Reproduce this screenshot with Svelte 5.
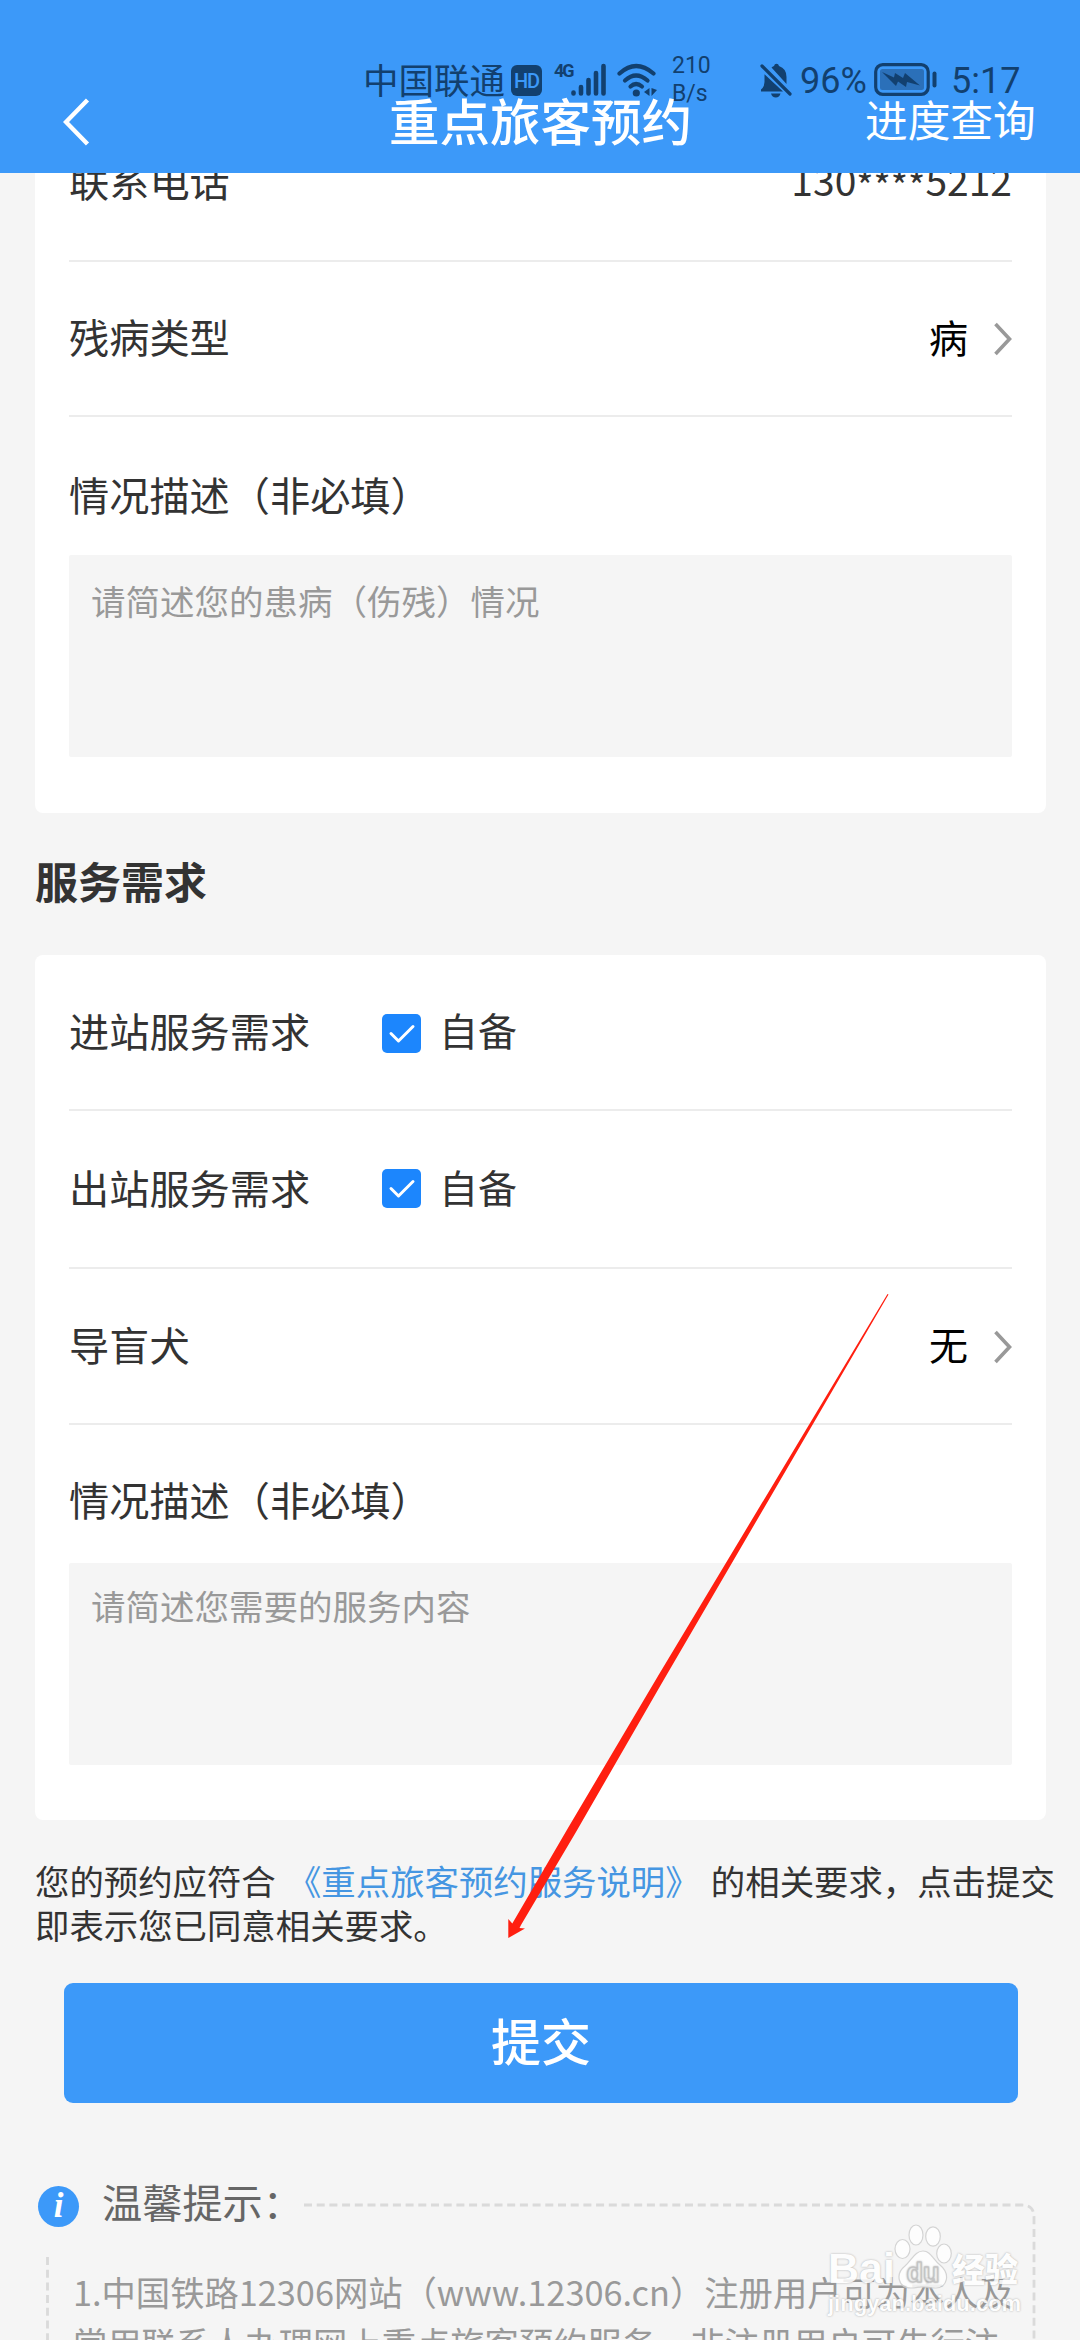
<script lang="ts">
    interface Need {
        label: string;
        option: string;
        checked: boolean;
    }

    let phoneStart: string = "130";
    let phoneEnd: string = "5212";
    let illness: string = "病";
    let guideDog: string = "无";

    let needs: Need[] = [
        { label: "进站服务需求", option: "自备", checked: true },
        { label: "出站服务需求", option: "自备", checked: true },
    ];

    let illnessText: string = "";
    let serviceText: string = "";

    function toggle(i: number): void {
        needs[i].checked = !needs[i].checked;
    }
</script>

{#snippet arrowRight()}
    <svg class="chevron" width="18" height="34" viewBox="0 0 18 34">
        <path d="M1.500 2 L15.500 17 L1.500 32" fill="none" stroke="#999" stroke-width="3.6" />
    </svg>
{/snippet}

<div class="phone">
    <header>
        <div class="status">
            <span class="carrier">中国联通</span>
            <span class="hd">HD</span>
            <span class="net">4G</span>
            <svg class="signal" width="36" height="34" viewBox="0 0 36 34">
                <g stroke="#12406f" stroke-width="4.6" stroke-linecap="round">
                    <path d="M2.5 29.5v1M10 24v6.5M17.5 17v13.5M25 10v20.5M32.5 3v27.5" />
                </g>
            </svg>
            <svg class="wifi" width="41" height="35" viewBox="0 0 41 35">
                <g fill="none" stroke="#12406f" stroke-width="4.2" stroke-linecap="round">
                    <path d="M2.5 10.5 Q19 -4.5 36.5 10.5" />
                    <path d="M8 17.5 Q19 7.5 30.5 17.5" />
                    <path d="M13.5 23.5 Q19 18.5 25 23.5" />
                </g>
                <circle cx="19.3" cy="30" r="3.6" fill="#12406f" />
                <path d="M32.500 25v8l-5.500-4zM34.500 25v8l5.500-6z" fill="#12406f" />
            </svg>
            <span class="speed">210<br />B/s</span>
            <svg class="bell" width="32" height="35" viewBox="0 0 32 35">
                <path
                    d="M11.5 4.5Q13.2 3.2 14 3Q14.500 0.700 16.500 0.700T19 3Q26.500 5.500 26.500 14V21zM4.500 11.200L23 28.500H1V26.500Q4.500 23.500 4.500 19z"
                    fill="#12406f"
                />
                <path d="M11 30.500h9.500q-1 4-4.700 4t-4.800-4z" fill="#12406f" />
                <path d="M2 3 L30 31" stroke="#12406f" stroke-width="3.2" stroke-linecap="round" />
            </svg>
            <span class="percent">96%</span>
            <svg class="battery" width="65" height="34" viewBox="0 0 65 34">
                <rect x="1.700" y="1.700" width="52.500" height="29.600" rx="7" fill="none" stroke="#12406f" stroke-width="3.200" />
                <rect x="6" y="6" width="44" height="21" rx="2.500" fill="#2b70b9" />
                <path d="M8 9L20 14.500L21 10L29 15L31 10L46 22.500L33 19L32 24L24 18.500L22 23z" fill="#12406f" />
                <path d="M60.500 10.500v12" stroke="#12406f" stroke-width="4" stroke-linecap="round" />
            </svg>
            <span class="clock">5:17</span>
        </div>
        <div class="nav">
            <svg class="back" width="28" height="48" viewBox="0 0 28 48">
                <path d="M24.500 2 L3 24 L24.500 46" fill="none" stroke="#fff" stroke-width="4.400" />
            </svg>
            <h1>重点旅客预约</h1>
            <span class="progress">进度查询</span>
        </div>
    </header>

    <main>
        <section class="card first">
            <div class="row">
                <span>联系电话</span>
                <span class="tel">{phoneStart}<span class="mask">****</span>{phoneEnd}</span>
            </div>
            <div class="row">
                <span>残病类型</span>
                <span class="value">{illness}{@render arrowRight()}</span>
            </div>
            <label class="desc" for="illness">情况描述（非必填）</label>
            <textarea id="illness" placeholder="请简述您的患病（伤残）情况" bind:value={illnessText}></textarea>
        </section>

        <h2>服务需求</h2>

        <section class="card second">
            {#each needs as need, i}
                <div class="row need">
                    <span class="need-label">{need.label}</span>
                    <button
                        class="check"
                        class:on={need.checked}
                        aria-label={need.option}
                        on:click={() => toggle(i)}
                    >
                        {#if need.checked}
                            <svg width="39" height="39" viewBox="0 0 39 39">
                                <path
                                    d="M9 19.500 L16.500 27 L31 12.500"
                                    fill="none"
                                    stroke="#fff"
                                    stroke-width="3"
                                    stroke-linecap="round"
                                    stroke-linejoin="round"
                                />
                            </svg>
                        {/if}
                    </button>
                    <span class="option">{need.option}</span>
                </div>
            {/each}
            <div class="row dog">
                <span>导盲犬</span>
                <span class="value">{guideDog}{@render arrowRight()}</span>
            </div>
            <label class="desc" for="service">情况描述（非必填）</label>
            <textarea id="service" placeholder="请简述您需要的服务内容" bind:value={serviceText}></textarea>
        </section>

        <p class="agree">
            您的预约应符合 <span class="link">《重点旅客预约服务说明》</span> 的相关要求，点击提交<br />即表示您已同意相关要求。
        </p>

        <button class="submit">提交</button>

        <section class="tips">
            <div class="tips-head">
                <span class="info">i</span>
                <span class="tips-title">温馨提示：</span>
            </div>
            <svg class="frame" width="997" height="146" viewBox="0 0 997 146">
                <g fill="none" stroke="#dadada" stroke-width="2.800" stroke-dasharray="8 4.700">
                    <path d="M265 10 H983 Q995 10 995 22 V146" />
                    <path d="M8.500 62 V146" />
                </g>
            </svg>
            <p>
                1.中国铁路12306网站（www.12306.cn）注册用户可为本人及<br />常用联系人办理网上重点旅客预约服务，非注册用户可先行注
            </p>
        </section>
    </main>

    <!-- red pointer towards the submit button -->
    <svg class="pointer" width="382" height="646" viewBox="0 0 382 646">
        <path
            d="M379.500 0 L380.500 0.600 L154.500 388 L68 538 L13 631 L11.500 634 L17 634.500 L0.300 644 L0.300 625 L4.300 629.500 L60 534 L150 382z"
            fill="#ff1f10"
        />
    </svg>

    <div class="watermark">
        <div class="brand">
            <span class="bai">Bai</span>
            <svg width="58" height="66" viewBox="0 0 58 66">
                <g fill="#fff" stroke="#cfcfcf" stroke-width="1.200">
                    <ellipse cx="8.500" cy="26" rx="7.500" ry="9.500" />
                    <ellipse cx="22" cy="12" rx="7" ry="10" />
                    <ellipse cx="39" cy="13.500" rx="7.300" ry="9.700" />
                    <ellipse cx="50" cy="30.500" rx="7.300" ry="9.500" />
                    <path d="M29 28C37 28 39 37 46 42C57 51 53 65 42 65C36 65 33 64 29 64S22 65 17 65C4 65 1 51 11 43C18 37 21 28 29 28z" />
                </g>
                <text x="29" y="59" text-anchor="middle" class="du">du</text>
            </svg>
            <span class="jy">经验</span>
        </div>
        <div class="site">jingyan.baidu.com</div>
    </div>
</div>

<style>
    :global(body) {
        background: #f5f5f5;
    }

    .phone {
        position: relative;
        width: 1080px;
        height: 2340px;
        overflow: hidden;
        background: #f5f5f5;
        color: #333;
        font-family: "Noto Sans CJK SC", sans-serif;
        font-size: 40.200px;
    }

    header {
        position: relative;
        z-index: 2;
        height: 173px;
        background: #3c99f9;
        box-sizing: border-box;
        padding-top: 76px;
    }

    .status {
        position: absolute;
        top: 56px;
        left: 363px;
        height: 48px;
        display: flex;
        align-items: center;
        color: #12406f;
        white-space: nowrap;
        font-family: Roboto, "Noto Sans CJK SC", sans-serif;
    }

    .carrier {
        width: 148px;
        margin-top: -2px;
        font-size: 35.500px;
        line-height: 48px;
        font-family: "Noto Sans CJK SC", sans-serif;
    }

    .hd {
        width: 31px;
        height: 31px;
        border-radius: 6px;
        background: #12406f;
        color: #3c99f9;
        font-size: 20px;
        font-weight: 500;
        line-height: 33px;
        text-align: center;
        letter-spacing: -1px;
    }

    .net {
        width: 18px;
        margin: -18px 0 0 12px;
        font-size: 18px;
        font-weight: 700;
        line-height: 20px;
        letter-spacing: -2px;
    }

    .signal {
        margin-left: -1px;
    }

    .wifi {
        margin-left: 10px;
    }

    .speed {
        width: 40px;
        margin-left: 14px;
        font-size: 23px;
        line-height: 28px;
    }

    .bell {
        margin-left: 48px;
    }

    .percent {
        width: 70px;
        margin: 2px 0 0 8px;
        font-size: 36px;
    }

    .battery {
        margin-left: 4px;
    }

    .clock {
        margin: 2px 0 0 12px;
        font-size: 36px;
    }

    .nav {
        display: grid;
        grid-template-columns: 389px 1fr 215px;
        align-items: center;
        height: 92px;
        color: #fff;
    }

    .back {
        margin-left: 63px;
    }

    h1 {
        margin: -6px 0 0;
        font-size: 50.500px;
        font-weight: 500;
        line-height: 60px;
        white-space: nowrap;
    }

    .progress {
        margin-top: -9px;
        font-size: 42.700px;
        line-height: 50px;
    }

    .card {
        margin: 0 34px 0 35px;
        padding: 0 34px 56px;
        border-radius: 8px;
        background: #fff;
    }

    .first {
        margin-top: -69px;
    }

    .second {
        padding-bottom: 55px;
    }

    .row {
        display: flex;
        justify-content: space-between;
        align-items: center;
        box-sizing: border-box;
        height: 155px;
        padding-bottom: 6px;
        border-bottom: 2px solid #ececec;
    }

    .first .row:first-child {
        height: 158px;
    }

    .tel {
        display: flex;
        font-size: 39px;
    }

    /* the asterisks sit lower than the font puts them */
    .mask {
        padding-top: 6px;
        margin-bottom: -6px;
        font-size: 37px;
    }

    .value {
        display: flex;
        align-items: center;
        gap: 26px;
        color: #000;
        font-size: 39px;
    }

    .chevron {
        margin-top: 7px;
    }

    .desc {
        display: block;
        padding: 48px 0 32px;
        line-height: 58px;
    }

    .second .desc {
        padding: 45px 0 35px;
    }

    textarea {
        display: block;
        box-sizing: border-box;
        width: 100%;
        height: 202px;
        padding: 20px 22px;
        border: 0;
        border-radius: 2px;
        resize: none;
        background: #f5f5f5;
        color: #333;
        font: 34.500px/50px "Noto Sans CJK SC", sans-serif;
    }

    .second textarea {
        padding-top: 17px;
    }

    textarea::placeholder {
        color: #999;
        opacity: 1;
    }

    h2 {
        margin: 39px 35px 46px;
        font-size: 43px;
        font-weight: 700;
        line-height: 57px;
    }

    .need {
        justify-content: flex-start;
        height: 156px;
    }

    .need + .need {
        height: 158px;
    }

    .need-label {
        width: 313px;
    }

    .check {
        width: 39px;
        height: 39px;
        margin-top: 8px;
        padding: 0;
        border: 0;
        border-radius: 5px;
        background: #ddd;
    }

    .need + .need .check {
        margin-top: 5px;
    }

    .check.on {
        background: #1c86fd;
    }

    .check svg {
        display: block;
    }

    .option {
        margin-left: 18px;
        font-size: 39px;
    }

    .dog {
        height: 156px;
    }

    .agree {
        margin: 38px 0 0 35px;
        font-size: 34.400px;
        line-height: 44px;
        word-spacing: 3.500px;
        white-space: nowrap;
    }

    .link {
        color: #4596e2;
    }

    .submit {
        display: block;
        width: 954px;
        height: 120px;
        margin: 37px 0 0 64px;
        padding: 0 0 8px;
        border: 0;
        border-radius: 9px;
        background: #3c99f9;
        color: #fff;
        font: 500 50px "Noto Sans CJK SC", sans-serif;
    }

    .tips {
        position: relative;
        margin: 72px 35px 0 38px;
    }

    .tips-head {
        display: flex;
        align-items: center;
        height: 58px;
        color: #666;
    }

    .info {
        width: 41px;
        height: 41px;
        margin: 4px 24px 0 0;
        border-radius: 50%;
        background: #3c99f9;
        color: #fff;
        font: italic 700 35px/40px "Liberation Serif", serif;
        text-align: center;
    }

    .tips-title {
        margin: -7px 0 0 -1px;
        line-height: 58px;
    }

    .frame {
        position: absolute;
        top: 20px;
        left: 1px;
    }

    .tips p {
        margin: 33px 0 0 35px;
        color: #999;
        font-size: 34.300px;
        line-height: 51px;
        white-space: nowrap;
    }

    .pointer {
        position: absolute;
        top: 1294px;
        left: 508px;
        z-index: 3;
    }

    .watermark {
        position: absolute;
        top: 2225px;
        left: 828px;
        z-index: 3;
        color: #fff;
        opacity: 0.85;
        text-shadow: 0 0 2px #999;
    }

    .brand {
        display: flex;
        align-items: flex-end;
        height: 64px;
    }

    .bai {
        width: 66px;
        font: 700 43px/42px "Liberation Sans", sans-serif;
    }

    .brand svg {
        flex: none;
    }

    .du {
        fill: #fff;
        stroke: #bbb;
        stroke-width: 1px;
        font: 700 27px "Liberation Sans", sans-serif;
    }

    .jy {
        font-size: 33px;
        font-weight: 900;
        line-height: 42px;
    }

    .site {
        font: 700 22px/30px "Liberation Sans", sans-serif;
    }
</style>
